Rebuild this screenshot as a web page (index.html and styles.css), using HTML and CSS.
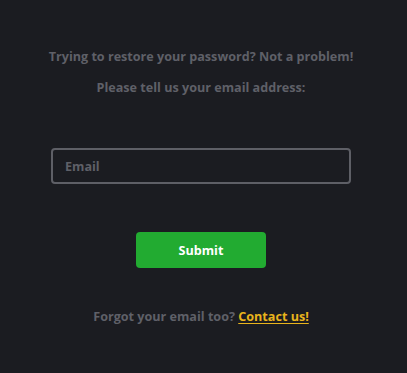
FILE: index.html
```html
<!DOCTYPE html>
<html lang="en">
<head>
<meta charset="utf-8">
<title>Restore password</title>
<link rel="stylesheet" href="styles.css">
</head>
<body>
<main class="restore">
  <p class="intro">Trying to restore your password? Not a problem!</p>
  <p class="intro">Please tell us your email address:</p>
  <form class="form">
    <input class="email" type="email" placeholder="Email">
    <button class="submit" type="button">Submit</button>
  </form>
  <p class="footer">Forgot your email too? <a class="contact" href="#">Contact us!</a></p>
</main>
</body>
</html>
```
FILE: styles.css
```css
html, body {
  margin: 0;
  padding: 0;
  background: #1b1c21;
  height: 100%;
}
body {
  font-family: "Open Sans", "DejaVu Sans", sans-serif;
  font-weight: 700;
  font-size: 12.6px;
  color: #5f6068;
  padding-right: 5px;
}
.restore {
  width: 300px;
  margin: 0 auto;
  padding-top: 48px;
  display: flex;
  flex-direction: column;
  align-items: center;
}
.intro {
  margin: 0;
  line-height: 18px;
  text-align: center;
  white-space: nowrap;
}
.intro + .intro {
  margin-top: 13px;
}
.form {
  width: 100%;
  margin-top: 51px;
  display: flex;
  flex-direction: column;
  align-items: center;
}
.email {
  box-sizing: border-box;
  width: 100%;
  height: 36px;
  background: #1b1c21;
  border: 2px solid #5e5f66;
  border-radius: 4px;
  padding: 0 12px;
  font: inherit;
  color: #cfd0d4;
  outline: none;
}
.email::placeholder {
  color: #5f6068;
}
.submit {
  margin-top: 48px;
  width: 130px;
  height: 36px;
  border: 0;
  border-radius: 4px;
  background: #22ab31;
  color: #ffffff;
  font: inherit;
  font-size: 12.6px;
}
.footer {
  margin: 40px 0 0;
  line-height: 18px;
  text-align: center;
}
.contact {
  color: #e9b41c;
  text-decoration: underline;
  text-underline-offset: 2px;
}
```
